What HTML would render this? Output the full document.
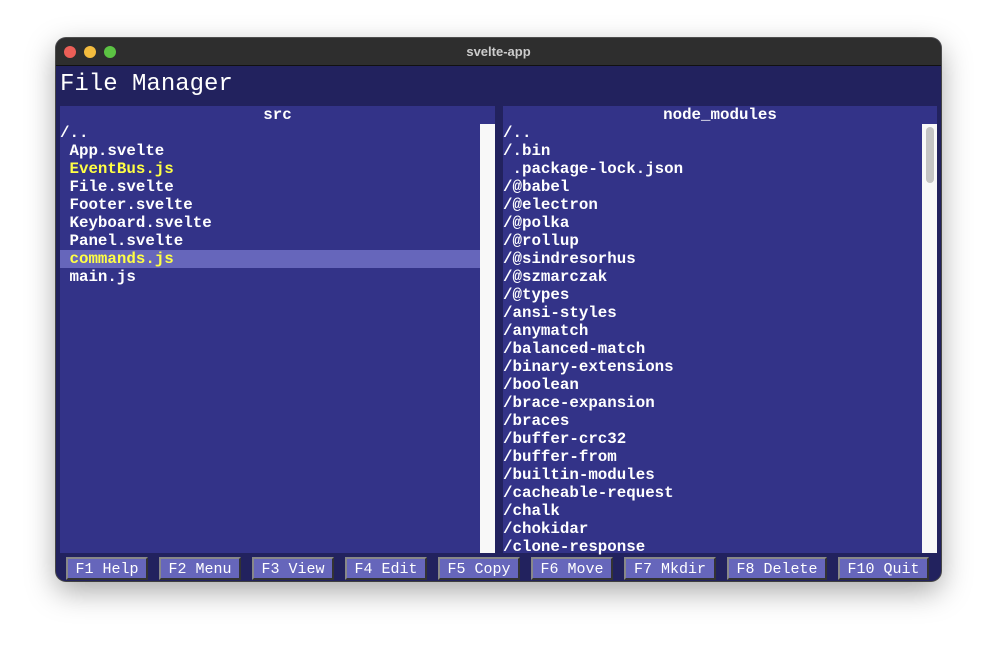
<!DOCTYPE html>
<html><head><meta charset="utf-8"><style>
*{margin:0;padding:0;box-sizing:border-box}
body{width:997px;height:655px;background:#fff;position:relative;overflow:hidden;font-family:"Liberation Mono",monospace}
.win{position:absolute;left:56px;top:38px;width:885px;height:543px;border-radius:10px;overflow:hidden;background:#22225e;box-shadow:0 10px 30px rgba(0,0,0,.35),0 0 0 1px #555}
.tb{position:absolute;left:0;top:0;width:100%;height:28px;background:#2e2e2e;border-bottom:1px solid #111;color:#ccc;font:bold 13px "Liberation Sans",sans-serif;text-align:center;line-height:28px}
.d{position:absolute;top:8px;width:12px;height:12px;border-radius:50%}
h1{position:absolute;left:4px;top:33px;font:24px "Liberation Mono",monospace;color:#fff;font-weight:normal}
.p{position:absolute;top:68px;height:447px;background:#333388;color:#fff;font-weight:bold;font-size:15.8px}
.p .t{height:18px;line-height:18px;text-align:center}
.r{height:18px;line-height:18px;white-space:pre}
.y{color:#ffff44}
.sel{background:#6666bb}
.sb{position:absolute;top:18px;width:15px;bottom:0;background:#f8f8f8}
.th{position:absolute;left:4px;top:3px;width:8px;height:56px;border-radius:4px;background:#c4c4c4}
.b{position:absolute;top:519px;height:23px;background:#6666bb;color:#fff;font-size:15px;line-height:22px;text-align:center;border:2px solid;border-color:#888 #333 #333 #888}
</style></head><body>
<div class="win">
<div class="tb">svelte-app</div>
<div class="d" style="left:8px;background:#ec5f57"></div>
<div class="d" style="left:28px;background:#f3bc3e"></div>
<div class="d" style="left:48px;background:#5cc343"></div>
<h1>File Manager</h1>
<div class="p" style="left:4px;width:435px">
<div class="t">src</div>
<div style="width:420px">
<div class="r">/..</div>
<div class="r"> App.svelte</div>
<div class="r y"> EventBus.js</div>
<div class="r"> File.svelte</div>
<div class="r"> Footer.svelte</div>
<div class="r"> Keyboard.svelte</div>
<div class="r"> Panel.svelte</div>
<div class="r y sel"> commands.js</div>
<div class="r"> main.js</div>
</div>
<div class="sb" style="left:420px"></div>
</div>
<div class="p" style="left:447px;width:434px">
<div class="t">node_modules</div>
<div class="r">/..</div>
<div class="r">/.bin</div>
<div class="r"> .package-lock.json</div>
<div class="r">/@babel</div>
<div class="r">/@electron</div>
<div class="r">/@polka</div>
<div class="r">/@rollup</div>
<div class="r">/@sindresorhus</div>
<div class="r">/@szmarczak</div>
<div class="r">/@types</div>
<div class="r">/ansi-styles</div>
<div class="r">/anymatch</div>
<div class="r">/balanced-match</div>
<div class="r">/binary-extensions</div>
<div class="r">/boolean</div>
<div class="r">/brace-expansion</div>
<div class="r">/braces</div>
<div class="r">/buffer-crc32</div>
<div class="r">/buffer-from</div>
<div class="r">/builtin-modules</div>
<div class="r">/cacheable-request</div>
<div class="r">/chalk</div>
<div class="r">/chokidar</div>
<div class="r">/clone-response</div>
<div class="sb" style="left:419px"><div class="th"></div></div>
</div>
<div class="b" style="left:10px;width:82px">F1 Help</div>
<div class="b" style="left:103px;width:82px">F2 Menu</div>
<div class="b" style="left:196px;width:82px">F3 View</div>
<div class="b" style="left:289px;width:82px">F4 Edit</div>
<div class="b" style="left:382px;width:82px">F5 Copy</div>
<div class="b" style="left:475px;width:82px">F6 Move</div>
<div class="b" style="left:568px;width:92px">F7 Mkdir</div>
<div class="b" style="left:671px;width:100px">F8 Delete</div>
<div class="b" style="left:782px;width:91px">F10 Quit</div>
</div>
</body></html>
